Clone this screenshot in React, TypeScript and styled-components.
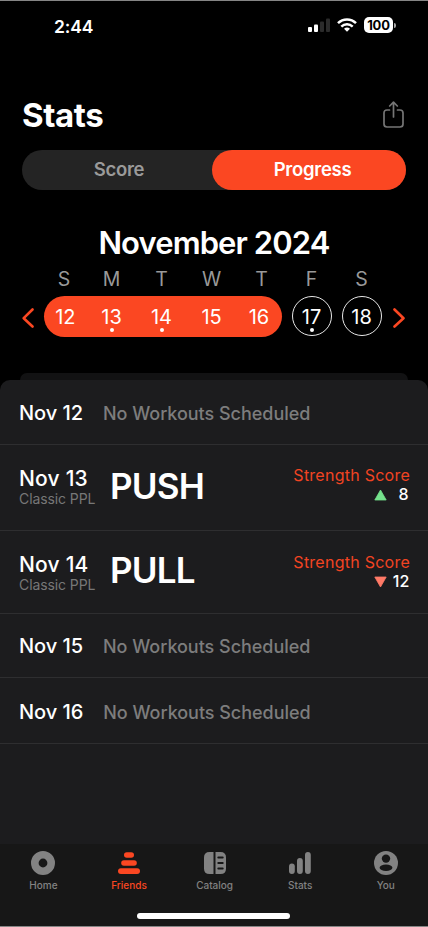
import React from 'react';
import styled, { createGlobalStyle } from 'styled-components';

const ORANGE = '#fb4722';
const GRAY = '#7d7d7d';

const GlobalStyle = createGlobalStyle`
  * { box-sizing: border-box; }
  body { margin: 0; background: #000; }
`;

const Screen = styled.div`
  width: 428px;
  height: 927px;
  display: flex;
  flex-direction: column;
  background: #000;
  border-top: 1px solid #858585;
  border-bottom: 1px solid #858585;
  color: #fff;
  font-family: Inter, sans-serif;
  overflow: hidden;
  white-space: nowrap;
`;

const StatusBar = styled.header`
  height: 50px;
  padding: 0 32px 0 54px;
  display: flex;
  align-items: center;
  justify-content: space-between;
`;

const Clock = styled.time`
  font-size: 17.5px;
  font-weight: 600;
  letter-spacing: -0.1px;
`;

const StatusIcons = styled.div`
  display: flex;
  align-items: center;
  gap: 7px;
  padding-bottom: 2px;
`;

const Battery = styled.div`
  display: flex;
  align-items: center;
  gap: 1px;
`;

const BatteryBody = styled.span`
  width: 29px;
  height: 16px;
  border-radius: 5px;
  background: #fff;
  color: #000;
  font-size: 13px;
  font-weight: 700;
  line-height: 16px;
  letter-spacing: -0.2px;
  text-align: center;
`;

const BatteryCap = styled.span`
  width: 2px;
  height: 5px;
  border-radius: 0 2px 2px 0;
  background: #a5a5a5;
`;

const TitleBar = styled.div`
  height: 48px;
  margin: 39px 0 12px;
  padding: 0 24.5px 0 22px;
  display: flex;
  align-items: center;
  justify-content: space-between;
`;

const Title = styled.h1`
  margin: 2px 0 0;
  font-size: 33px;
  font-weight: 700;
  letter-spacing: -0.4px;
  line-height: 40px;
`;

const Segmented = styled.div`
  height: 40px;
  margin: 0 22px;
  display: flex;
  flex-shrink: 0;
  border-radius: 20px;
  background: #242424;
`;

const Segment = styled.button<{ $active?: boolean }>`
  width: ${(p) => (p.$active ? 194 : 190)}px;
  padding: 0 0 3px ${(p) => (p.$active ? 7 : 4)}px;
  border: 0;
  border-radius: 20px;
  background: ${(p) => (p.$active ? ORANGE : 'transparent')};
  color: ${(p) => (p.$active ? '#fff' : '#9a9a9a')};
  font: 600 18.5px Inter, sans-serif;
  letter-spacing: -0.3px;
`;

const Month = styled.h2`
  margin: 32px 0 0;
  height: 42px;
  line-height: 42px;
  font-size: 31px;
  font-weight: 600;
  letter-spacing: -0.9px;
  text-align: center;
`;

const Calendar = styled.section`
  display: grid;
  grid-template-columns: 22px 237.5px 10px 40px 10px 40px 11.5px 12px;
  grid-template-rows: 32px 41px;
  padding-left: 22px;
  height: 109px;
  flex-shrink: 0;
`;

const WeekDays = styled.div`
  grid-column: 1 / -1;
  display: grid;
  grid-template-columns: repeat(7, 50px);
  padding-left: 14.5px;
  color: #999;
  font-size: 19.5px;
  line-height: 31px;
  text-align: center;
  span:first-child { padding-left: 5px; }
`;

const Arrow = styled.button`
  display: flex;
  align-items: center;
  padding: 2px 0 0;
  border: 0;
  background: none;
  color: ${ORANGE};
`;

const WeekRange = styled.div`
  display: grid;
  grid-template-columns: 42.5px 50px 50px 50px 45px;
  border-radius: 21px;
  background: ${ORANGE};
`;

const Day = styled.span<{ $outlined?: boolean }>`
  display: flex;
  flex-direction: column;
  align-items: center;
  height: ${(p) => (p.$outlined ? '40px' : '41px')};
  padding-top: ${(p) => (p.$outlined ? '10px' : '11px')};
  border: ${(p) => (p.$outlined ? '1px solid #e8e8e8' : '0')};
  border-radius: 50%;
  font-size: 20px;
  line-height: 21px;
  letter-spacing: -0.1px;
`;

const Dot = styled.i`
  width: 4px;
  height: 4px;
  border-radius: 50%;
  background: #fff;
`;

const BackCard = styled.div`
  height: 7px;
  margin: 0 20px;
  flex-shrink: 0;
  border-radius: 7px 7px 0 0;
  background: #121213;
`;

const Sheet = styled.main`
  flex: 1;
  border-radius: 10px 10px 0 0;
  background: #1c1c1e;
`;

const Row = styled.article<{ $height: number; $offset?: number }>`
  height: ${(p) => p.$height}px;
  padding: ${(p) => p.$offset ?? 0}px 18px 0 19px;
  display: flex;
  align-items: center;
  border-bottom: 1px solid #2e2e30;
`;

const DateText = styled.span<{ $large?: boolean }>`
  font-size: ${(p) => (p.$large ? 21 : 20)}px;
  font-weight: 500;
  line-height: 24px;
  letter-spacing: ${(p) => (p.$large ? 0.2 : -0.05)}px;
`;

const EmptyText = styled.span`
  margin: 2px 0 0 20px;
  color: ${GRAY};
  font-size: 18px;
  font-weight: 500;
  line-height: 24px;
  letter-spacing: -0.03px;
`;

const Plan = styled.div`
  width: 91px;
  display: flex;
  flex-direction: column;
  padding-bottom: 1px;
`;

const PlanName = styled.span`
  color: #777;
  font-size: 14px;
  line-height: 16px;
  letter-spacing: -0.1px;
`;

const Workout = styled.strong<{ $lift: number }>`
  flex: 1;
  padding-bottom: ${(p) => p.$lift}px;
  font-size: 35px;
  font-weight: 600;
  letter-spacing: -0.8px;
`;

const ScoreBlock = styled.div<{ $lift: number }>`
  display: flex;
  flex-direction: column;
  align-items: flex-end;
  padding-bottom: ${(p) => p.$lift}px;
`;

const ScoreLabel = styled.span`
  color: #f24422;
  font-size: 16px;
  line-height: 19px;
  letter-spacing: 0.25px;
`;

const ScoreValue = styled.span<{ $up?: boolean }>`
  display: flex;
  align-items: center;
  gap: ${(p) => (p.$up ? 11 : 6)}px;
  padding-right: ${(p) => (p.$up ? 1.5 : 0.7)}px;
  font-size: 16px;
  font-weight: 500;
  line-height: 19px;
`;

const BottomBar = styled.footer`
  height: 82px;
  flex-shrink: 0;
  background: #171717;
`;

const Tabs = styled.nav`
  display: grid;
  grid-template-columns: repeat(5, 85.6px);
  height: 50px;
  padding-left: 0.6px;
`;

const Tab = styled.a<{ $active?: boolean }>`
  display: flex;
  flex-direction: column;
  align-items: center;
  gap: 4px;
  padding-top: 7px;
  color: ${(p) => (p.$active ? ORANGE : '#828282')};
  font-size: 10px;
  font-weight: 500;
  line-height: 13px;
`;

const HomeIndicator = styled.div`
  width: 153px;
  height: 5.5px;
  margin: 19px 0 0 137px;
  border-radius: 3px;
  background: #fff;
`;

const Signal = () => (
  <svg width="22" height="14" viewBox="0 0 22 14">
    <rect x="0" y="9" width="4" height="5" rx="1" fill="#fff" />
    <rect x="6" y="6.5" width="4" height="7.5" rx="1" fill="#fff" />
    <rect x="12" y="3.5" width="4" height="10.5" rx="1" fill="#2b2b2b" />
    <rect x="18" y="0.5" width="4" height="13.5" rx="1" fill="#2b2b2b" />
  </svg>
);

const Wifi = () => (
  <svg width="20" height="14" viewBox="0 0 20 14" fill="none" stroke="#fff" strokeWidth="2.5">
    <path d="M1 5.2 C6 0.2 14 0.2 19 5.2" />
    <path d="M4.3 8.6 C7.5 5.6 12.5 5.6 15.7 8.6" />
    <path d="M10 13.8 L7 10.8 Q10 8.4 13 10.8 Z" fill="#fff" stroke="none" />
  </svg>
);

const Share = () => (
  <svg width="21" height="27" viewBox="0 0 21 27" fill="none" stroke="#757575" strokeWidth="1.7" strokeLinecap="round" strokeLinejoin="round">
    <path d="M6.5 9 H4 Q1 9 1 12 V23 Q1 26 4 26 H17 Q20 26 20 23 V12 Q20 9 17 9 H14.5" />
    <path d="M10.5 16 V1.5 M6.7 5 L10.5 1.2 L14.3 5" />
  </svg>
);

const Chevron = ({ right }: { right?: boolean }) => (
  <svg width="12" height="20" viewBox="0 0 12 20" fill="none" stroke="currentColor" strokeWidth="2.6" strokeLinecap="round" strokeLinejoin="round">
    <path d={right ? 'M1.5 1.5 L10.5 10.2 L1.5 18.5' : 'M10.5 1.5 L1.7 10.2 L10.5 18.5'} />
  </svg>
);

const Trend = ({ up }: { up?: boolean }) => (
  <svg width="13" height="12" viewBox="0 0 13 12">
    <path
      d={up ? 'M6.5 1 L12.2 11 H0.8 Z' : 'M6.5 11 L12.2 1 H0.8 Z'}
      fill={up ? '#75e28c' : '#ff7a67'}
      stroke={up ? '#75e28c' : '#ff7a67'}
      strokeWidth="0.8"
      strokeLinejoin="round"
    />
  </svg>
);

const HomeIcon = () => (
  <svg width="24" height="24" viewBox="0 0 24 24">
    <circle cx="12" cy="12" r="8.2" fill="none" stroke="currentColor" strokeWidth="7.6" />
  </svg>
);

const FriendsIcon = () => (
  <svg width="24" height="24" viewBox="0 0 24 24" fill="currentColor">
    <rect x="7" y="1.3" width="10" height="5.5" rx="2.75" />
    <rect x="4.2" y="9.2" width="15.6" height="5.5" rx="2.75" />
    <rect x="1" y="17.2" width="22" height="5.8" rx="2.9" />
  </svg>
);

const CatalogIcon = () => (
  <svg width="24" height="24" viewBox="0 0 24 24" fill="currentColor">
    <path d="M10.5 1 V23 H6.5 Q1 23 1 17.5 V6.5 Q1 1 6.5 1 Z" />
    <path d="M12.5 1 H17.5 Q23 1 23 6.5 V17.5 Q23 23 17.5 23 H12.5 Z" />
    <path d="M15.3 6.5 H19.7 M15.3 12 H19.7 M15.3 17.5 H19.7" stroke="#171717" strokeWidth="2" strokeLinecap="round" />
  </svg>
);

const StatsIcon = () => (
  <svg width="24" height="24" viewBox="0 0 24 24" fill="currentColor">
    <rect x="1" y="12.5" width="5.8" height="10.5" rx="2.9" />
    <rect x="9" y="7" width="5.8" height="16" rx="2.9" />
    <rect x="17" y="1" width="5.8" height="22" rx="2.9" />
  </svg>
);

const YouIcon = () => (
  <svg width="24" height="24" viewBox="0 0 24 24">
    <circle cx="12" cy="12" r="12" fill="currentColor" />
    <circle cx="12" cy="7.6" r="4.2" fill="#171717" />
    <ellipse cx="12" cy="16.8" rx="6.4" ry="3.2" fill="#171717" />
  </svg>
);

interface WorkoutRowProps {
  date: string;
  name: string;
  score: number;
  up?: boolean;
  height: number;
  offset: number;
  lift: number;
}

const WorkoutRow = ({ date, name, score, up, height, offset, lift }: WorkoutRowProps) => (
  <Row $height={height} $offset={offset}>
    <Plan>
      <DateText $large>{date}</DateText>
      <PlanName>Classic PPL</PlanName>
    </Plan>
    <Workout $lift={lift}>{name}</Workout>
    <ScoreBlock $lift={up ? 5 : 3}>
      <ScoreLabel>Strength Score</ScoreLabel>
      <ScoreValue $up={up}>
        <Trend up={up} />
        {score}
      </ScoreValue>
    </ScoreBlock>
  </Row>
);

const EmptyRow = ({ date, height, offset }: { date: string; height: number; offset?: number }) => (
  <Row $height={height} $offset={offset}>
    <DateText>{date}</DateText>
    <EmptyText>No Workouts Scheduled</EmptyText>
  </Row>
);

export default function App() {
  return (
    <>
      <GlobalStyle />
      <Screen>
        <StatusBar>
          <Clock>2:44</Clock>
          <StatusIcons>
            <Signal />
            <Wifi />
            <Battery>
              <BatteryBody>100</BatteryBody>
              <BatteryCap />
            </Battery>
          </StatusIcons>
        </StatusBar>
        <TitleBar>
          <Title>Stats</Title>
          <Share />
        </TitleBar>
        <Segmented>
          <Segment>Score</Segment>
          <Segment $active>Progress</Segment>
        </Segmented>
        <Month>November 2024</Month>
        <Calendar>
          <WeekDays>
            {['S', 'M', 'T', 'W', 'T', 'F', 'S'].map((d, i) => (
              <span key={i}>{d}</span>
            ))}
          </WeekDays>
          <Arrow aria-label="Previous week"><Chevron /></Arrow>
          <WeekRange>
            <Day>12</Day>
            <Day>13<Dot /></Day>
            <Day>14<Dot /></Day>
            <Day>15</Day>
            <Day>16</Day>
          </WeekRange>
          <span />
          <Day $outlined>17<Dot /></Day>
          <span />
          <Day $outlined>18</Day>
          <span />
          <Arrow aria-label="Next week"><Chevron right /></Arrow>
        </Calendar>
        <BackCard />
        <Sheet>
          <EmptyRow date="Nov 12" height={65} offset={2} />
          <WorkoutRow date="Nov 13" name="PUSH" score={8} up height={86} offset={0} lift={3} />
          <WorkoutRow date="Nov 14" name="PULL" score={12} height={83} offset={3} lift={7} />
          <EmptyRow date="Nov 15" height={64} offset={1} />
          <EmptyRow date="Nov 16" height={66} offset={3} />
        </Sheet>
        <BottomBar>
          <Tabs>
            <Tab><HomeIcon />Home</Tab>
            <Tab $active><FriendsIcon />Friends</Tab>
            <Tab><CatalogIcon />Catalog</Tab>
            <Tab><StatsIcon />Stats</Tab>
            <Tab><YouIcon />You</Tab>
          </Tabs>
          <HomeIndicator />
        </BottomBar>
      </Screen>
    </>
  );
}
